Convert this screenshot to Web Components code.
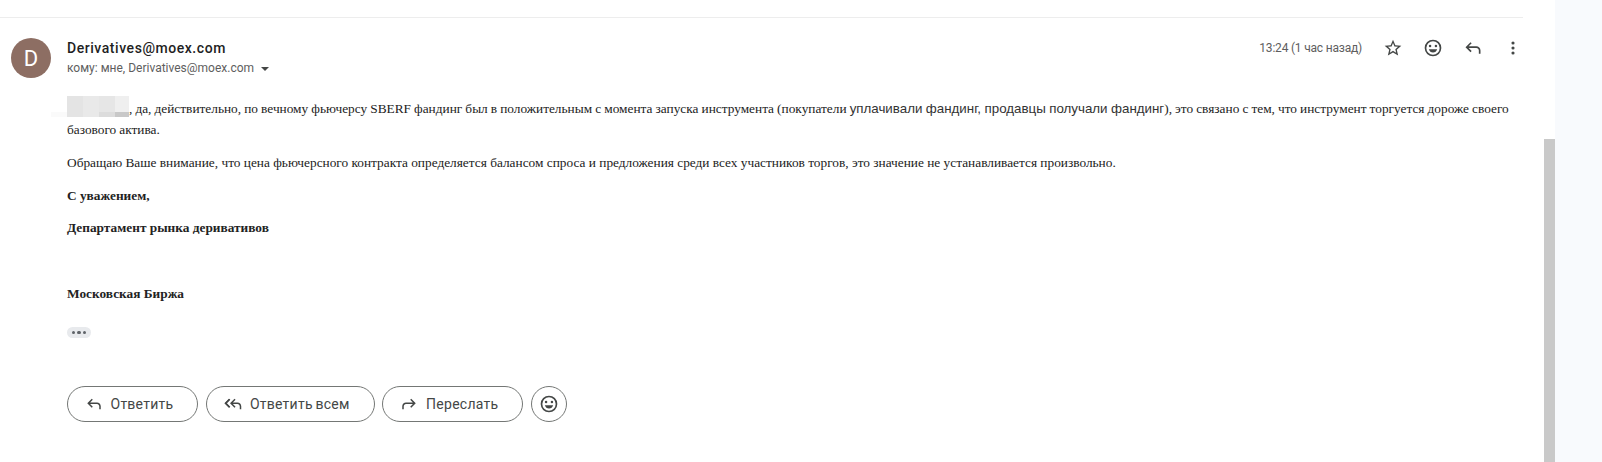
<!DOCTYPE html>
<html lang="ru">
<head>
<meta charset="UTF-8">
<title>Derivatives@moex.com</title>
<style>
  html, body { margin: 0; height: 100%; overflow: hidden; background: #fff; }
  .first { word-spacing: -.25px; }
  .sans { font-family: "Liberation Sans", sans-serif; color: #333; }
</style>
</head>
<body>
<mail-page>
  <mail-message>
    <mail-header slot="header"></mail-header>
    <mail-text>
      <p class="first"><mail-redacted></mail-redacted>, да, действительно, по вечному фьючерсу SBERF фандинг был в положительным с момента запуска инструмента (покупатели <span class="sans">уплачивали фандинг, продавцы получали фандинг</span>), это связано с тем, что инструмент торгуется дороже своего<br>базового актива.</p>
      <p>Обращаю Ваше внимание, что цена фьючерсного контракта определяется балансом спроса и предложения среди всех участников торгов, это значение не устанавливается произвольно.</p>
      <p><b>С уважением,</b></p>
      <p><b>Департамент рынка деривативов</b></p>
      <p>&nbsp;</p>
      <p><b>Московская Биржа</b></p>
    </mail-text>
    <mail-more></mail-more>
    <mail-actions></mail-actions>
  </mail-message>
</mail-page>

<script>
const ICONS = {
  star: '<path fill="#444746" d="M22 9.240l-7.190-.620L12 2 9.190 8.630 2 9.240l5.460 4.730L5.820 21 12 17.270 18.180 21l-1.630-7.030L22 9.240zM12 15.400l-3.760 2.270 1-4.280-3.320-2.880 4.380-.380L12 6.100l1.710 4.040 4.380.380-3.320 2.880 1 4.280L12 15.400z"/>',
  smile: '<path fill="#444746" d="M12 2a10 10 0 1 0 0 20 10 10 0 0 0 0-20zm0 18a8 8 0 1 1 0-16 8 8 0 0 1 0 16z"/><circle fill="#444746" cx="8.500" cy="9.500" r="1.500"/><circle fill="#444746" cx="15.500" cy="9.500" r="1.500"/><path fill="#444746" d="M7 13.500h10c-.6 2.400-2.600 4-5 4s-4.400-1.600-5-4z"/>',
  reply: '<path fill="#444746" d="M21 19h-2v-4c0-1.650-1.350-3-3-3H6.830l3.580 3.590L9 17l-6-6 6-6 1.410 1.410L6.830 10H16c2.760 0 5 2.240 5 5v4z"/>',
  replyAll: '<path fill="#444746" d="M23 19h-2v-4c0-1.650-1.350-3-3-3h-6.170l3.580 3.590L14 17l-6-6 6-6 1.410 1.410L11.830 10H18c2.760 0 5 2.240 5 5v4z"/><path fill="#444746" d="M8.410 6.410 7 5 1 11l6 6 1.410-1.410L3.830 11z"/><path fill="#444746" d="M5.410 6.410 4 5l-6 6 6 6 1.410-1.410L.83 11z" transform="translate(2.500 0)"/>',
  forward: '<path fill="#444746" d="M3 19h2v-4c0-1.650 1.350-3 3-3h9.170l-3.580 3.590L15 17l6-6-6-6-1.410 1.410L17.170 10H8c-2.760 0-5 2.240-5 5v4z"/>',
  more: '<circle fill="#444746" cx="12" cy="6" r="1.900"/><circle fill="#444746" cx="12" cy="12" r="1.900"/><circle fill="#444746" cx="12" cy="18" r="1.900"/>'
}
const icon = (name, size) => `<svg width="${size}" height="${size}" viewBox="0 0 24 24">${ICONS[name]}</svg>`

customElements.define("mail-page", class extends HTMLElement {
  constructor() {
    super()
    this.attachShadow({ mode: "open" }).innerHTML = `
      <style>
        :host { display: flex; height: 462px; background: #f8fafd; }
        .main { width: 1555px; flex: none; background: #fff; display: flex; }
        .content { width: 1523px; flex: none; }
        .rule { height: 18px; box-sizing: border-box; border-bottom: 1px solid #ededed; }
        .track { flex: 1; display: flex; justify-content: flex-end; padding-top: 139px; box-sizing: border-box; }
        .thumb { width: 11px; background: #c9c9c9; }
      </style>
      <div class="main">
        <div class="content"><div class="rule"></div><slot></slot></div>
        <div class="track"><div class="thumb"></div></div>
      </div>`
  }
})

customElements.define("mail-message", class extends HTMLElement {
  constructor() {
    super()
    this.attachShadow({ mode: "open" }).innerHTML = `
      <style>:host { display: block; padding-top: 20px; }</style>
      <slot name="header"></slot><slot></slot>`
  }
})

customElements.define("mail-header", class extends HTMLElement {
  constructor() {
    super()
    this.attachShadow({ mode: "open" }).innerHTML = `
      <style>
        :host { display: flex; height: 40px; padding-left: 11px; font-family: Roboto, "Liberation Sans", sans-serif; }
        .avatar { width: 40px; height: 40px; border-radius: 50%; background: #8d6e63; color: #fff;
          font-size: 22px; display: flex; align-items: center; justify-content: center; margin-right: 16px; flex: none; }
        .who { flex: 1; }
        .name { font-size: 14px; font-weight: 500; color: #1f1f1f; line-height: 20px; letter-spacing: .55px; }
        .to { font-size: 12px; color: #5e5e5e; line-height: 20px; display: flex; align-items: center; }
        .caret { width: 0; height: 0; border: 4px solid transparent; border-top: 4px solid #444746; border-bottom: 0; margin-left: 7px; margin-top: 1px; }
        .right { display: flex; align-items: flex-start; color: #5e5e5e; font-size: 12px; margin-right: -10px; }
        .time { line-height: 20px; margin-right: 11px; letter-spacing: -.2px; }
        .btn { width: 40px; display: flex; justify-content: center; }
      </style>
      <div class="avatar">D</div>
      <div class="who">
        <div class="name">Derivatives@moex.com</div>
        <div class="to">кому: мне, Derivatives@moex.com<span class="caret"></span></div>
      </div>
      <div class="right">
        <span class="time">13:24 (1 час назад)</span>
        <span class="btn">${icon("star", 20)}</span>
        <span class="btn">${icon("smile", 20)}</span>
        <span class="btn">${icon("reply", 20)}</span>
        <span class="btn">${icon("more", 20)}</span>
      </div>`
  }
})

customElements.define("mail-text", class extends HTMLElement {
  constructor() {
    super()
    this.attachShadow({ mode: "open" }).innerHTML = `
      <style>
        :host { display: block; padding-left: 67px; margin-top: 20px; font: 13.33px/21px "Liberation Serif", serif; color: #222; }
        ::slotted(p) { margin: 0 0 11.8px; }
      </style>
      <slot></slot>`
  }
})

// mosaic left by the screenshot's author over the addressee's name
customElements.define("mail-redacted", class extends HTMLElement {
  constructor() {
    super()
    this.attachShadow({ mode: "open" }).innerHTML = `
      <style>
        :host { display: inline-block; position: relative; width: 62px; height: 21px; margin: -4px 0; vertical-align: 0;
          background: linear-gradient(90deg, #e4e4e4 16px, #e9e9e9 16px 32px, #e6e6e6 32px 48px, #efefef 48px); }
        .low { position: absolute; left: 32px; right: 0; bottom: 0; height: 5px;
          background: linear-gradient(90deg, #dcdcdc 16px, #c8c8c8 16px); }
        .edge { position: absolute; left: -16px; width: 16px; bottom: 0; height: 5px; background: #fafafa; }
      </style>
      <div class="edge"></div><div class="low"></div>`
  }
})

customElements.define("mail-more", class extends HTMLElement {
  constructor() {
    super()
    this.attachShadow({ mode: "open" }).innerHTML = `
      <style>
        :host { display: block; margin: 23px 0 0 67px; height: 11px; }
        .pill { width: 24px; height: 11px; border-radius: 6px; background: #e8eaed; display: flex; align-items: center; justify-content: center; gap: 2px; }
        i { width: 3.500px; height: 3.500px; border-radius: 50%; background: #5f6368; }
      </style>
      <div class="pill"><i></i><i></i><i></i></div>`
  }
})

customElements.define("mail-button", class extends HTMLElement {
  constructor() {
    super()
    this.attachShadow({ mode: "open" }).innerHTML = `
      <style>
        :host { display: inline-flex; align-items: center; box-sizing: border-box; height: 36px; border: 1px solid #747775; border-radius: 18px;
          padding: 0 24px 0 17px; font: 14px Roboto, "Liberation Sans", sans-serif; letter-spacing: .25px; word-spacing: -1px; color: #444746; background: #fff; }
        span { display: flex; margin-right: 8px; }
      </style>
      <span>${icon(this.getAttribute("icon"), 18)}</span><slot></slot>`
  }
})

customElements.define("mail-actions", class extends HTMLElement {
  constructor() {
    super()
    this.attachShadow({ mode: "open" }).innerHTML = `
      <style>
        :host { display: flex; gap: 7.500px; margin: 48px 0 0 66.500px; }
        .round { width: 36px; height: 36px; box-sizing: border-box; border: 1px solid #747775; border-radius: 50%; display: flex; align-items: center; justify-content: center; }
      </style>
      <mail-button icon="reply">Ответить</mail-button>
      <mail-button icon="replyAll">Ответить всем</mail-button>
      <mail-button icon="forward">Переслать</mail-button>
      <div class="round">${icon("smile", 20)}</div>`
  }
})
</script>
</body>
</html>
